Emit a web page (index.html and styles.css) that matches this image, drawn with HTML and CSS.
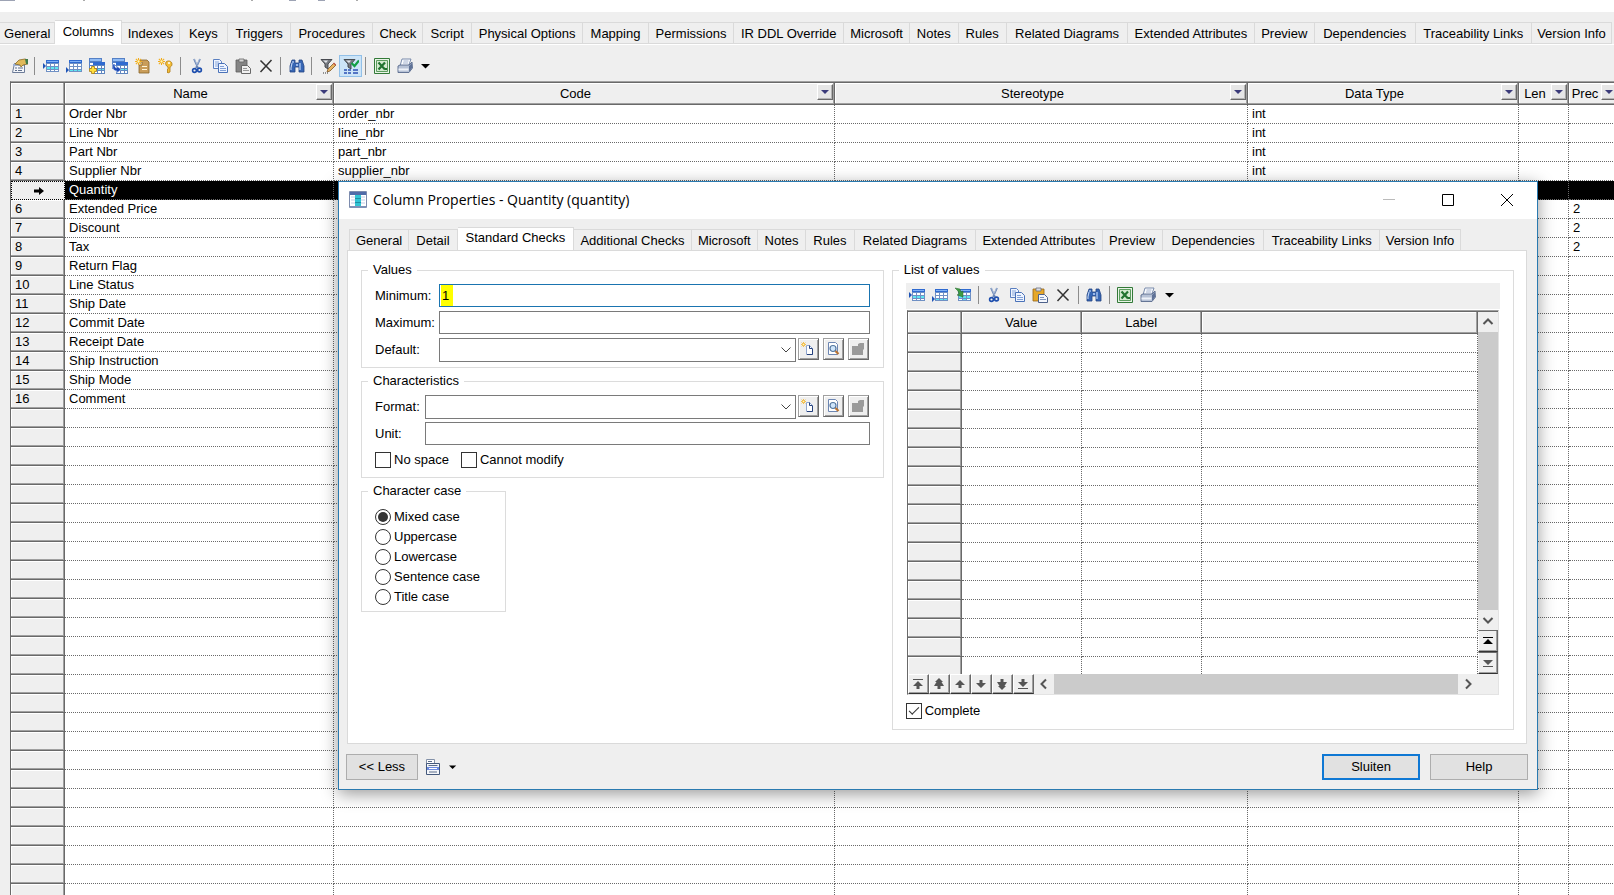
FILE: index.html
```html
<!DOCTYPE html>
<html lang="en">
<head>
<meta charset="utf-8">
<title>Table Properties - Columns</title>
<link rel="stylesheet" href="styles.css">
</head>
<body>
<svg class="sprite" aria-hidden="true">
  <symbol id="i-props" viewBox="0 0 16 16"><path d="M2.500 5.500h10v9h-12z" fill="#f4f6fa" stroke="#6d7c98"/><path d="M1 6h11v2H1z" fill="#9db2d6"/><path d="M3 10h2m1 0h5M3 12.500h2m1 0h4" stroke="#61718d"/><path d="M3 6l4-4 6-1 3 1v4l-5 1-2 2-1-2z" fill="#e0b95a" stroke="#8a6b25" stroke-width=".8"/><path d="M13 1h3v5h-2z" fill="#3f7a4a"/></symbol>
  <symbol id="i-grid" viewBox="0 0 16 16"><path d="M3 2h13v12H3z" fill="#6f90c4"/><path d="M3 2h13v3H3z" fill="#2f6ad0"/><path d="M4 3h11v1H4z" fill="#7fb0f5"/><path d="M4 6h3v2H4zM8 6h3v2H8zM12 6h3v2h-3zM4 12h3v1H4zM8 12h3v1H8zM12 12h3v1h-3z" fill="#fff"/></symbol>
  <symbol id="i-insert" viewBox="0 0 16 16"><use href="#i-grid"/><path d="M4 9h3v2H4zM8 9h3v2H8zM12 9h3v2h-3z" fill="#5ee6f0"/><path d="M0 5l3 3-3 3z" fill="#1f55b8"/></symbol>
  <symbol id="i-add" viewBox="0 0 16 16"><use href="#i-grid"/><path d="M4 9h3v2H4zM8 9h3v2H8zM12 9h3v2h-3z" fill="#fff"/><path d="M4 12h3v1H4zM8 12h3v1H8zM12 12h3v1h-3z" fill="#5ee6f0"/><path d="M0 9l3 3-3 3z" fill="#1f55b8"/></symbol>
  <symbol id="i-two" viewBox="0 0 16 16"><path d="M0 0h13v11H0z" fill="#5580c5"/><path d="M1 1h11v2H1z" fill="#8fbbf5"/><path d="M1 5h3v2H1zM1 8h3v2H1z" fill="#fff"/><path d="M4 4h12v12H4z" fill="#5f86bf"/><path d="M4 4h12v3H4z" fill="#2f6ad0"/><path d="M5 8h3v2H5zM9 8h3v2H9zM13 8h2v2h-2zM5 13h3v2H5zM9 13h3v2H9zM13 13h2v2h-2z" fill="#fff"/><path d="M5 11h3v1H5zM9 11h3v1H9zM13 11h2v1h-2z" fill="#5ee6f0"/></symbol>
  <symbol id="i-addcols" viewBox="0 0 16 16"><use href="#i-two"/><path d="M2.500 8.500h3v2h2v3h-2v2h-3v-2h-2v-3h2z" fill="#ffdf3d" stroke="#a87b12" stroke-width=".8"/></symbol>
  <symbol id="i-repcols" viewBox="0 0 16 16"><use href="#i-two"/><path d="M1 6c-1 5 1 7 4 7v2l4-3.500L5 8v2C3 10 2.500 8 3 6z" fill="#1d49b5" stroke="#e6eeff" stroke-width=".5"/></symbol>
  <symbol id="i-spark" viewBox="0 0 8 8"><path d="M4 0v8M0 4h8M1 1l6 6M7 1L1 7" stroke="#f2ad1b" stroke-width="1.200"/><circle cx="4" cy="4" r="1.300" fill="#fff8bd"/></symbol>
  <symbol id="i-newobj" viewBox="0 0 16 16"><path d="M5 2h7l2 2v11H4V7h3V4H5z" fill="#c99d5a" stroke="#89642c" stroke-width=".8"/><path d="M7 8h5v1H7zM7 11h5v1H7z" fill="#fff4d6"/><use href="#i-spark" x="0" y="0" width="7" height="7"/></symbol>
  <symbol id="i-newkey" viewBox="0 0 16 16"><path d="M8 4c2-2 6-1 6 2 0 2-1 2.500-2 3v5l-2 1-1-1 1-1-1-1 1-1V9C8 8 7 6 8 4z" fill="#f3bf3a" stroke="#b07a13" stroke-width=".8"/><circle cx="11" cy="5" r="1" fill="#fff"/><use href="#i-spark" x="0" y="0" width="7" height="7"/></symbol>
  <symbol id="i-cut" viewBox="0 0 16 16"><path d="M5 1l4 9M11 1L7 10" stroke="#6b86b5" stroke-width="1.800"/><path d="M5.500 1l3 7M10.500 1l-2 5" stroke="#c5d3ea" stroke-width=".6"/><circle cx="5.500" cy="12.500" r="1.900" fill="none" stroke="#1e4fae" stroke-width="1.600"/><circle cx="10.500" cy="12" r="1.900" fill="none" stroke="#1e4fae" stroke-width="1.600"/></symbol>
  <symbol id="i-copy" viewBox="0 0 16 16"><path d="M1.500 1.500h6l2 2v7h-8z" fill="#eef4ff" stroke="#5a7fc0"/><path d="M3 4h4M3 6h5M3 8h5" stroke="#8aa8da"/><path d="M6.500 5.500h6l3 3v6h-9z" fill="#eef4ff" stroke="#4a72b8"/><path d="M8 8.500h4M8 10.500h6M8 12.500h6" stroke="#7f9fd6"/></symbol>
  <symbol id="i-paste" viewBox="0 0 16 16"><path d="M1 2h11v12H1z" fill="#e6a82a" stroke="#94651a" stroke-width=".8"/><path d="M4 1h5v3H4z" fill="#d9dde5" stroke="#69707e" stroke-width=".8"/><path d="M6.500 7.500h6l3 3v5h-9z" fill="#f4f7fd" stroke="#4d618a"/><path d="M8 10.500h4M8 12.500h6" stroke="#7f95bd"/></symbol>
  <symbol id="i-pasteoff" viewBox="0 0 16 16"><path d="M1 2h11v12H1z" fill="#858585" stroke="#5e5e5e" stroke-width=".8"/><path d="M4 1h5v3H4z" fill="#d5d5d5" stroke="#666" stroke-width=".8"/><path d="M6.500 7.500h6l3 3v5h-9z" fill="#f1f1f1" stroke="#686868"/><path d="M8 10.500h4M8 12.500h6" stroke="#999"/></symbol>
  <symbol id="i-x" viewBox="0 0 16 16"><path d="M2.500 2.500l11 11M13.500 2l-11 12" stroke="#333" stroke-width="1.500"/></symbol>
  <symbol id="i-find" viewBox="0 0 16 16"><path d="M3 2h3v3h4V2h3l2 6v6h-5V9H6v5H1V8z" fill="#3766b4" stroke="#234584" stroke-width=".8"/><path d="M3 5l-1 5v2M11 5v7M4 3v2" stroke="#bdd4f8" stroke-width="1.200"/><path d="M7 6h2v2H7z" fill="#9bb9ea"/></symbol>
  <symbol id="i-funnel" viewBox="0 0 16 16"><path d="M1 1.500h11L8 6v5l-3-2V6z" fill="#777b82" stroke="#3c3f45" stroke-width=".9"/><path d="M3 2.500h5L6 5z" fill="#e3e5ea"/></symbol>
  <symbol id="i-filteredit" viewBox="0 0 16 16"><use href="#i-funnel"/><path d="M14 5l2 2-6 6-3 1 1-3z" fill="#e9b562" stroke="#7c5526" stroke-width=".8"/><path d="M14 4.500l2 2-1 1-2-2z" fill="#c65b4c"/><path d="M3 15h6" stroke="#333" stroke-dasharray="1 1"/></symbol>
  <symbol id="i-filteron" viewBox="0 0 16 16"><use href="#i-funnel"/><path d="M8.500 5l3 3L16 2.500" stroke="#12a045" stroke-width="2.200" fill="none"/><path d="M1 12h3m1 0h3m2 0h5M1 15h3m1 0h3m2 0h5" stroke="#2d50b4" stroke-width="1.400"/></symbol>
  <symbol id="i-excel" viewBox="0 0 16 16"><path d="M.5.5h15v15H.5z" fill="#e9f4e7" stroke="#337a38"/><path d="M2.500 2.500h11v11h-11z" fill="#d4ead0" stroke="#5c9c5e"/><path d="M4.500 4.500l6.500 7M11 4.500l-6.500 7" stroke="#227430" stroke-width="2.200"/><path d="M11 10h2v2h-2z" fill="#227430"/></symbol>
  <symbol id="i-print" viewBox="0 0 16 16"><path d="M5 1h9l-2.500 7H3z" fill="#fafcff" stroke="#6b7fa3" stroke-width=".9"/><path d="M6.500 3h5M6 5h5" stroke="#8da0c0" stroke-width=".8"/><path d="M1 8l2-1h9l3-3 .5 6-3.500 4.500H1z" fill="#b7c2d6" stroke="#586a8c" stroke-width=".9"/><path d="M1.500 10.500h10v2h-10z" fill="#eef2f9"/><path d="M12 8l3-3v5l-3 4z" fill="#5f7297"/></symbol>
  <symbol id="i-pick" viewBox="0 0 16 16"><use href="#i-grid"/><path d="M4 9h3v2H4zM8 9h3v2H8zM12 9h3v2h-3zM8 12h3v1H8z" fill="#5ee6f0"/><path d="M0 1l5 1 1 3 2-1v6L2 8l2-1-1-3z" fill="#3f9c43" stroke="#256b2a" stroke-width=".5"/></symbol>
  <symbol id="i-caret" viewBox="0 0 10 10"><path d="M0 3h9L4.500 7.500z" fill="#000"/></symbol>
  <symbol id="i-newdoc" viewBox="0 0 16 16"><path d="M6.500 4.500h3l3 3v6h-6z" fill="#fff" stroke="#8fa5cf"/><path d="M9.500 4.500v3h3M12.500 8v5.500H7" fill="none" stroke="#24407c"/><use href="#i-spark" x="1" y="1" width="5" height="5"/></symbol>
  <symbol id="i-view" viewBox="0 0 16 16"><path d="M3.500 1.500h7l2 2v10h-9z" fill="#fff" stroke="#6d86b2"/><circle cx="8" cy="7.500" r="3" fill="#cfe5fa" stroke="#54779f" stroke-width="1.200"/><path d="M10.500 10l3 3" stroke="#b87333" stroke-width="2.200"/></symbol>
  <symbol id="i-folder" viewBox="0 0 16 16"><path d="M2 5h6V3l2-1h4v6l-1 1v5H2z" fill="#9a9a9a"/></symbol>
  <symbol id="i-column" viewBox="0 0 18 18"><path d="M.5.5h17v16H.5z" fill="#fff" stroke="#7d8cae"/><path d="M1 1h16v3H1z" fill="#506ba8"/><path d="M2 5h4v2H2zM2 8h4v2H2zM2 11h4v2H2zM12 5h4v2h-4zM12 8h4v2h-4zM12 11h4v2h-4z" fill="#dfe5f2"/><path d="M6 4h6v11H6z" fill="#2fc4d4"/><path d="M6 7.500h6M6 11.500h6" stroke="#1d8fa5"/><path d="M1 15h16v2H1z" fill="#7f91b6"/></symbol>
  <symbol id="i-menu" viewBox="0 0 15 16"><path d="M.5.5h8v5h-8z" fill="#fff" stroke="#8391a8"/><path d="M.5 4.500h13v11H.5z" fill="#f4f6fa" stroke="#44597c"/><path d="M2 2.500h4M2.500 6.500h9M3 13h8" stroke="#5b6c89"/><path d="M1 8h12v3H1z" fill="#6c8be0"/><path d="M3 9.500h8" stroke="#fff"/></symbol>
  <symbol id="a-up" viewBox="0 0 12 12"><path d="M6 2l5 5H7.500v3h-3V7H1z"/></symbol>
  <symbol id="a-down" viewBox="0 0 12 12"><path d="M6 10L1 5h3.500V2h3v3H11z"/></symbol>
  <symbol id="a-top" viewBox="0 0 12 12"><path d="M1 1h10v1H1zM6 3l5 5H7.500v3h-3V8H1z"/></symbol>
  <symbol id="a-bottom" viewBox="0 0 12 12"><path d="M1 10h10v1H1zM6 9L1 4h3.500V1h3v3H11z"/></symbol>
  <symbol id="a-pgup" viewBox="0 0 12 12"><path d="M6 0l4 4H8.500L11 8H7.500v3h-3V8H1l2.500-4H2z"/></symbol>
  <symbol id="a-pgdown" viewBox="0 0 12 12"><path d="M6 12L2 8h1.500L1 4h3.500V1h3v3H11L8.500 8H10z"/></symbol>
  <symbol id="a-first" viewBox="0 0 12 12"><path d="M1 2h10v1H1zM6 4l5 5H1z"/></symbol>
  <symbol id="a-last" viewBox="0 0 12 12"><path d="M1 9h10v1H1zM6 8L1 3h10z"/></symbol>
  <symbol id="c-down" viewBox="0 0 12 12"><path d="M1.500 3.500L6 8l4.500-4.500" fill="none" stroke="currentColor"/></symbol>
</svg>

<div class="app">
  <div class="caption-strip" aria-hidden="true">
    <svg width="370" height="3"><path d="M0 0h15M289 0h7M318 0h7" stroke="#9da3b4" stroke-width="2"/><path d="M83 0h2M251 0h2M356 0h2" stroke="#aaa" stroke-width="2"/></svg>
  </div>

  <nav class="tabs tabs-main" role="tablist" id="main-tabs"></nav>

  <div class="toolbar toolbar-main" role="toolbar" aria-label="Columns">
    <button class="tool" aria-label="Properties"><svg><use href="#i-props"/></svg></button>
    <span class="sep"></span>
    <button class="tool" aria-label="Insert a row"><svg><use href="#i-insert"/></svg></button>
    <button class="tool" aria-label="Add a row"><svg><use href="#i-add"/></svg></button>
    <button class="tool" aria-label="Add columns"><svg><use href="#i-addcols"/></svg></button>
    <button class="tool" aria-label="Replicate columns"><svg><use href="#i-repcols"/></svg></button>
    <button class="tool" aria-label="Create index"><svg><use href="#i-newobj"/></svg></button>
    <button class="tool" aria-label="Create key"><svg><use href="#i-newkey"/></svg></button>
    <span class="sep"></span>
    <button class="tool" aria-label="Cut"><svg><use href="#i-cut"/></svg></button>
    <button class="tool" aria-label="Copy"><svg><use href="#i-copy"/></svg></button>
    <button class="tool" aria-label="Paste"><svg><use href="#i-pasteoff"/></svg></button>
    <button class="tool" aria-label="Delete"><svg><use href="#i-x"/></svg></button>
    <span class="sep"></span>
    <button class="tool" aria-label="Find"><svg><use href="#i-find"/></svg></button>
    <span class="sep"></span>
    <button class="tool" aria-label="Customize filter"><svg><use href="#i-filteredit"/></svg></button>
    <button class="tool pressed" aria-label="Enable filter"><svg><use href="#i-filteron"/></svg></button>
    <span class="sep"></span>
    <button class="tool" aria-label="Export to Excel"><svg><use href="#i-excel"/></svg></button>
    <button class="tool" aria-label="Print"><svg><use href="#i-print"/></svg></button>
    <button class="tool caret" aria-label="Print options"><svg><use href="#i-caret"/></svg></button>
  </div>

  <div class="grid-frame grid-main">
    <table class="grid">
      <colgroup><col class="w-row"><col class="w-name"><col class="w-code"><col class="w-stereo"><col class="w-type"><col class="w-small"><col class="w-small"></colgroup>
      <thead>
        <tr>
          <th></th>
          <th><div class="head"><span>Name</span><button class="drop" aria-label="Filter Name"></button></div></th>
          <th><div class="head"><span>Code</span><button class="drop" aria-label="Filter Code"></button></div></th>
          <th><div class="head"><span>Stereotype</span><button class="drop" aria-label="Filter Stereotype"></button></div></th>
          <th><div class="head"><span>Data Type</span><button class="drop" aria-label="Filter Data Type"></button></div></th>
          <th><div class="head"><span>Len</span><button class="drop" aria-label="Filter Length"></button></div></th>
          <th><div class="head"><span>Prec</span><button class="drop" aria-label="Filter Precision"></button></div></th>
        </tr>
      </thead>
      <tbody id="main-rows"></tbody>
    </table>
  </div>
</div>

<section class="dialog" role="dialog" aria-labelledby="dlg-title">
  <header class="titlebar">
    <svg class="title-icon"><use href="#i-column"/></svg>
    <h1 id="dlg-title">Column Properties - Quantity (quantity)</h1>
    <button class="win" aria-label="Minimize" disabled><svg viewBox="0 0 12 12"><path d="M0 5.500h12" stroke="#bbb"/></svg></button>
    <button class="win" aria-label="Maximize"><svg viewBox="0 0 12 12"><path d="M.5.5h11v11H.5z" fill="none" stroke="#000"/></svg></button>
    <button class="win" aria-label="Close"><svg viewBox="0 0 12 12"><path d="M0 0l12 12M12 0L0 12" stroke="#000"/></svg></button>
  </header>

  <nav class="tabs tabs-dialog" role="tablist" id="dialog-tabs"></nav>

  <div class="panel">
    <div class="side">
      <fieldset class="values">
        <legend>Values</legend>
        <div class="field wide"><label for="min">Minimum:</label><input class="box focus" id="min" type="text" value="1"></div>
        <div class="field wide"><label for="max">Maximum:</label><input class="box" id="max" type="text"></div>
        <div class="field wide"><label for="def">Default:</label>
          <div class="combo-line">
            <div class="combo"><select class="box" id="def"><option></option></select><svg><use href="#c-down"/></svg></div>
            <button class="mini" aria-label="Create default"><svg><use href="#i-newdoc"/></svg></button>
            <button class="mini" aria-label="Select default"><svg><use href="#i-view"/></svg></button>
            <button class="mini" aria-label="Default properties" disabled><svg><use href="#i-folder"/></svg></button>
          </div>
        </div>
      </fieldset>

      <fieldset>
        <legend>Characteristics</legend>
        <div class="field"><label for="fmt">Format:</label>
          <div class="combo-line">
            <div class="combo"><select class="box" id="fmt"><option></option></select><svg><use href="#c-down"/></svg></div>
            <button class="mini" aria-label="Create format"><svg><use href="#i-newdoc"/></svg></button>
            <button class="mini" aria-label="Select format"><svg><use href="#i-view"/></svg></button>
            <button class="mini" aria-label="Format properties" disabled><svg><use href="#i-folder"/></svg></button>
          </div>
        </div>
        <div class="field"><label for="unit">Unit:</label><input class="box" id="unit" type="text"></div>
        <div class="checks">
          <label class="opt"><input type="checkbox">No space</label>
          <label class="opt"><input type="checkbox">Cannot modify</label>
        </div>
      </fieldset>

      <fieldset class="case">
        <legend>Character case</legend>
        <label class="opt"><input type="radio" name="case" checked>Mixed case</label>
        <label class="opt"><input type="radio" name="case">Uppercase</label>
        <label class="opt"><input type="radio" name="case">Lowercase</label>
        <label class="opt"><input type="radio" name="case">Sentence case</label>
        <label class="opt"><input type="radio" name="case">Title case</label>
      </fieldset>
    </div>

    <fieldset class="lov">
      <legend>List of values</legend>
      <div class="toolbar" role="toolbar" aria-label="List of values">
        <button class="tool" aria-label="Insert a row"><svg><use href="#i-insert"/></svg></button>
        <button class="tool" aria-label="Add a row"><svg><use href="#i-add"/></svg></button>
        <button class="tool" aria-label="Add values"><svg><use href="#i-pick"/></svg></button>
        <span class="sep"></span>
        <button class="tool" aria-label="Cut"><svg><use href="#i-cut"/></svg></button>
        <button class="tool" aria-label="Copy"><svg><use href="#i-copy"/></svg></button>
        <button class="tool" aria-label="Paste"><svg><use href="#i-paste"/></svg></button>
        <button class="tool" aria-label="Delete"><svg><use href="#i-x"/></svg></button>
        <span class="sep"></span>
        <button class="tool" aria-label="Find"><svg><use href="#i-find"/></svg></button>
        <span class="sep"></span>
        <button class="tool" aria-label="Export to Excel"><svg><use href="#i-excel"/></svg></button>
        <button class="tool" aria-label="Print"><svg><use href="#i-print"/></svg></button>
        <button class="tool caret" aria-label="Print options"><svg><use href="#i-caret"/></svg></button>
      </div>
      <div class="lov-frame">
        <div class="lov-body">
          <table class="grid">
            <colgroup><col class="w-row"><col class="w-val"><col class="w-val"><col></colgroup>
            <thead><tr><th></th><th>Value</th><th>Label</th><th></th></tr></thead>
            <tbody id="lov-rows"></tbody>
          </table>
        </div>
        <div class="vscroll">
          <button class="arrow" aria-label="Scroll up"><svg viewBox="0 0 12 12"><path d="M1.500 8L6 3.500 10.500 8"/></svg></button>
          <div class="thumb"></div>
          <button class="arrow" aria-label="Scroll down"><svg viewBox="0 0 12 12"><path d="M1.500 4L6 8.500 10.500 4"/></svg></button>
          <button class="nav black" aria-label="Move to top"><svg><use href="#a-first"/></svg></button>
          <button class="nav" aria-label="Move to bottom"><svg><use href="#a-last"/></svg></button>
        </div>
        <div class="hscroll">
          <button class="nav" aria-label="First row"><svg><use href="#a-top"/></svg></button>
          <button class="nav" aria-label="Page up"><svg><use href="#a-pgup"/></svg></button>
          <button class="nav" aria-label="Row up"><svg><use href="#a-up"/></svg></button>
          <button class="nav" aria-label="Row down"><svg><use href="#a-down"/></svg></button>
          <button class="nav" aria-label="Page down"><svg><use href="#a-pgdown"/></svg></button>
          <button class="nav" aria-label="Last row"><svg><use href="#a-bottom"/></svg></button>
          <button class="arrow" aria-label="Scroll left"><svg viewBox="0 0 12 12"><path d="M8 1.500L3.500 6 8 10.500"/></svg></button>
          <div class="thumb"></div>
          <button class="arrow" aria-label="Scroll right"><svg viewBox="0 0 12 12"><path d="M4 1.500L8.500 6 4 10.500"/></svg></button>
        </div>
      </div>
      <label class="opt complete"><input type="checkbox" checked>Complete</label>
    </fieldset>
  </div>

  <footer class="footer">
    <button class="btn less">&lt;&lt; Less</button>
    <button class="menu" aria-label="Menu"><svg class="menu-icon"><use href="#i-menu"/></svg><svg class="menu-caret"><use href="#i-caret"/></svg></button>
    <span class="grow"></span>
    <button class="btn primary">Sluiten</button>
    <button class="btn">Help</button>
  </footer>
</section>
<script src="app.js"></script>
</body>
</html>
```
FILE: app.js
```js
// Tab captions with their relative widths
const mainTabs = [['General', 55], ['Columns', 67], ['Indexes', 57], ['Keys', 48], ['Triggers', 63],
  ['Procedures', 82], ['Check', 50], ['Script', 48], ['Physical Options', 112], ['Mapping', 65],
  ['Permissions', 86], ['IR DDL Override', 110], ['Microsoft', 66], ['Notes', 48], ['Rules', 48],
  ['Related Diagrams', 122], ['Extended Attributes', 127], ['Preview', 60], ['Dependencies', 101],
  ['Traceability Links', 117], ['Version Info', 80]];
const dialogTabs = [['General', 59], ['Detail', 48], ['Standard Checks', 117], ['Additional Checks', 118],
  ['Microsoft', 66], ['Notes', 48], ['Rules', 48], ['Related Diagrams', 122], ['Extended Attributes', 127],
  ['Preview', 60], ['Dependencies', 102], ['Traceability Links', 116], ['Version Info', 81]];

function buildTabs(id, tabs, active) {
  const nav = document.getElementById(id);
  for (const [name, share] of tabs) {
    const b = document.createElement('button');
    b.setAttribute('role', 'tab');
    b.setAttribute('aria-selected', name === active);
    b.className = name === active ? 'tab active' : 'tab';
    b.style.flexGrow = share;
    b.textContent = name;
    nav.append(b);
  }
}
buildTabs('main-tabs', mainTabs, 'Columns');
buildTabs('dialog-tabs', dialogTabs, 'Standard Checks');

// [name, code, data type, precision]
const columns = [['Order Nbr', 'order_nbr', 'int'], ['Line Nbr', 'line_nbr', 'int'], ['Part Nbr', 'part_nbr', 'int'],
  ['Supplier Nbr', 'supplier_nbr', 'int'], ['Quantity'], ['Extended Price', '', '', '2'], ['Discount', '', '', '2'],
  ['Tax', '', '', '2'], ['Return Flag'], ['Line Status'], ['Ship Date'], ['Commit Date'], ['Receipt Date'],
  ['Ship Instruction'], ['Ship Mode'], ['Comment']];
const current = 4;

function addRow(body, head, cells) {
  const tr = body.insertRow();
  const th = document.createElement('th');
  th.scope = 'row';
  th.textContent = head;
  tr.append(th);
  for (const text of cells) tr.insertCell().textContent = text;
  return tr;
}
const mainBody = document.getElementById('main-rows');
for (let i = 0; i < 42; i++) {
  const [name = '', code = '', type = '', prec = ''] = columns[i] || [];
  const head = i < columns.length && i !== current ? i + 1 : '';
  const tr = addRow(mainBody, head, [name, code, '', type, '', prec]);
  if (i === current) {
    tr.className = 'current';
    tr.firstChild.innerHTML = '<svg viewBox="0 0 10 10"><path d="M0 3.500h5V1l5 4-5 4V6.500H0z"/></svg>';
  }
}
const lovBody = document.getElementById('lov-rows');
for (let i = 0; i < 18; i++) addRow(lovBody, '', ['', '', '']);
```
FILE: styles.css
```css
* { box-sizing: border-box; }

body {
  margin: 0;
  height: 100vh;
  overflow: hidden;
  background: #efefef;
  color: #000;
  font: 13px/16px "Liberation Sans", Arial, sans-serif;
}

button, input, select { font: inherit; color: inherit; margin: 0; }
button { padding: 0; border: 0; background: none; }
svg { display: block; }
.sprite { position: absolute; width: 0; height: 0; }

.app { height: 100vh; display: flex; flex-direction: column; overflow: hidden; }
.caption-strip { height: 12px; flex: none; background: #fff; }

/* Tabs */
.tabs { display: flex; align-items: flex-end; flex: none; }
.tabs-main { padding: 8px 2px 0 0; border-bottom: 1px solid #fff; }
.tabs-dialog { padding: 8px 76px 0 10px; }
.tab {
  flex: 1 1 0;
  height: 22px;
  min-width: 0;
  padding-top: 2px;
  white-space: nowrap;
  border: 1px solid #dadada;
  border-left: 0;
  background: #efefef;
}
.tabs-dialog .tab { height: 21px; border-bottom: 0; }
.tab:first-child { border-left: 1px solid #dadada; }
.tabs-main .tab:first-child { border-left: 0; }
.tab.active, .tabs-dialog .tab.active {
  height: 24px;
  padding: 0 0 2px;
  background: #fff;
  border-bottom: 0;
}
.tabs-dialog .tab.active { height: 23px; }

/* Toolbars */
.toolbar { display: flex; align-items: center; height: 26px; padding-bottom: 2px; background: #efefef; }
.toolbar-main { flex: none; height: 36px; padding: 6px 0 0 8px; }
.tool { display: flex; align-items: center; justify-content: center; width: 23px; height: 22px; }
.tool svg { width: 16px; height: 16px; }
.tool.caret { width: 20px; }
.tool.caret svg { width: 10px; height: 10px; }
.tool.pressed { background: #cce4f7; border: 1px solid #92c0e8; }
.sep { width: 8px; height: 18px; border-left: 1px solid #8c8c8c; margin: 0 -3px 0 3px; }

/* Grids */
.grid-main { flex: 1; min-height: 0; margin-left: 10px; overflow: hidden; }
.grid-frame { border-top: 1px solid #a0a0a0; border-left: 1px solid #696969; background: #fff; }
.grid { width: 100%; table-layout: fixed; border-collapse: separate; border-spacing: 0; border-top: 1px solid #696969; }
.grid-main .grid { width: 1608px; }
.w-row { width: 54px; }
.w-name { width: 269px; }
.w-code { width: 501px; }
.w-stereo { width: 413px; }
.w-type { width: 271px; }
.w-small { width: 50px; }
.w-val { width: 120px; }
.grid th, .grid td { height: 19px; padding: 0 4px; overflow: hidden; white-space: nowrap; line-height: 18px; }
.grid th {
  font-weight: normal;
  text-align: left;
  background: #efefef;
  border-right: 1px solid #696969;
  border-bottom: 1px solid #696969;
  box-shadow: inset -1px -1px #a0a0a0, inset 1px 1px #fff;
}
.grid thead th { height: 22px; padding: 0; text-align: center; }
.grid td { border-right: 1px dotted #696969; border-bottom: 1px dotted #696969; }
.head { display: flex; align-items: center; height: 20px; }
.head span { flex: 1; }
.drop {
  flex: none;
  display: flex;
  align-items: center;
  justify-content: center;
  width: 16px;
  height: 16px;
  margin: 0 1px 3px 0;
  border: 1px solid;
  border-color: #fff #696969 #696969 #fff;
  background: #e6e6e6;
  box-shadow: inset -1px -1px #b4b4b4;
}
.drop::before { content: ""; width: 0; height: 0; border: 4px solid transparent; border-top-color: #3b3b7a; border-bottom: 0; }
.current td { background: #000; color: #fff; }
.current th { border: 1px dotted #000; box-shadow: none; }
.current th svg { width: 10px; height: 10px; margin-left: 18px; }

/* Dialog window */
.dialog {
  position: absolute;
  left: 338px;
  right: 76px;
  top: 181px;
  background: #efefef;
  border: 1px solid #2a7ab0;
  box-shadow: 0 4px 16px rgba(0, 0, 0, .4);
}
.titlebar { display: flex; align-items: center; height: 37px; padding: 0 1px 2px 10px; background: #fff; }
.title-icon { width: 18px; height: 18px; }
.titlebar h1 { flex: 1; margin: 0 0 0 6px; font: 14px/20px "Open Sans", "Noto Sans", sans-serif; }
.win { display: flex; align-items: center; justify-content: center; width: 59px; height: 35px; }
.win svg { width: 12px; height: 12px; }

.panel {
  display: grid;
  grid-template-columns: minmax(0, 21fr) minmax(0, 25fr);
  gap: 8px;
  margin: 0 10px 0 8px;
  padding: 11px 12px 13px 13px;
  background: #fff;
  border: 1px solid #dadada;
}
.side { display: flex; flex-direction: column; gap: 5px; align-items: stretch; }

fieldset { min-width: 0; margin: 0; padding: 6px 13px 6px 13px; border: 1px solid #dcdcdc; }
legend { margin-left: -7px; padding: 0 5px; line-height: 16px; }
.values { padding-bottom: 5px; }
.field { display: grid; grid-template-columns: 50px minmax(0, 1fr); align-items: center; margin-bottom: 3px; }
.field.wide { grid-template-columns: 64px minmax(0, 1fr); margin-bottom: 4px; }
.field.wide:last-child { margin-bottom: 0; }
.box { display: block; width: 100%; height: 23px; padding: 0 2px; border: 1px solid #7a7a7a; border-radius: 0; background: #fff; outline: 0; }
.box.focus { border-color: #1a74b0; background: linear-gradient(#ff0, #ff0) 1px 0 / 12px 100% no-repeat #fff; }
select.box { appearance: none; height: 24px; }
.combo-line { display: flex; align-items: flex-start; gap: 4px; padding-right: 1px; }
.combo { position: relative; flex: 1; margin-right: -2px; }
.combo svg { position: absolute; right: 4px; top: 6px; width: 12px; height: 12px; color: #444; pointer-events: none; }
.mini {
  display: flex;
  align-items: center;
  justify-content: center;
  width: 21px;
  height: 22px;
  border: 1px solid;
  border-color: #a0a0a0 #696969 #696969 #a0a0a0;
  background: #efefef;
  box-shadow: inset 1px 1px #fff, inset -1px -1px #a0a0a0;
}
.mini svg { width: 16px; height: 16px; }

.opt { display: flex; align-items: center; gap: 3px; height: 20px; }
.checks { display: flex; gap: 12px; height: 23px; align-items: center; }
.case { width: 145px; padding-top: 8px; padding-bottom: 4px; }
.opt input { appearance: none; flex: none; display: grid; place-content: center; width: 16px; height: 16px; border: 1px solid #333; background: #fff; }
.opt input[type=radio] { border-radius: 50%; }
.opt input[type=radio]:checked::before { content: ""; width: 10px; height: 10px; border-radius: 50%; background: #333; }
.opt input[type=checkbox]:checked::before { content: ""; width: 9px; height: 4px; margin-bottom: 3px; border: solid #333; border-width: 0 0 1px 1px; transform: rotate(-45deg); }

/* List of values */
.lov { padding: 5px 13px 8px; }
.lov-frame {
  display: grid;
  grid-template-columns: minmax(0, 1fr) 20px;
  margin: 1px 1px 0;
  border-top: 1px solid #a0a0a0;
  border-left: 1px solid #696969;
  border-right: 1px solid #e3e3e3;
  border-bottom: 1px solid #e3e3e3;
}
.lov-body { height: 363px; overflow: hidden; }
.vscroll { display: flex; flex-direction: column; border-top: 1px solid #696969; background: #efefef; }
.hscroll { grid-column: 1 / -1; display: flex; height: 20px; background: #efefef; padding-right: 20px; }
.thumb { flex: 1; background: #cbcbcb; }
.arrow { display: flex; align-items: center; justify-content: center; width: 20px; height: 20px; }
.arrow svg { width: 12px; height: 12px; fill: none; stroke: #555; stroke-width: 2; }
.nav {
  display: flex;
  align-items: center;
  justify-content: center;
  width: 21px;
  height: 20px;
  border: 1px solid;
  border-color: #fff #696969 #333 #fff;
  background: #efefef;
  box-shadow: inset -1px -1px #a0a0a0;
}
.vscroll .nav { width: 20px; height: 22px; border-top-color: #696969; }
.nav svg { width: 12px; height: 12px; fill: #555; }
.nav.black svg { fill: #000; }
.complete { margin-top: 6px; }

/* Footer */
.footer { display: flex; align-items: center; padding: 10px 9px 9px 7px; }
.grow { flex: 1; }
.btn { width: 98px; height: 26px; border: 1px solid #adadad; background: #e1e1e1; }
.btn + .btn { margin-left: 10px; }
.btn.less { width: 72px; }
.btn.primary { border: 2px solid #0f78d4; }
.menu { display: flex; align-items: center; gap: 8px; margin-left: 8px; }
.menu-icon { width: 15px; height: 16px; }
.menu-caret { width: 8px; height: 8px; }
```
